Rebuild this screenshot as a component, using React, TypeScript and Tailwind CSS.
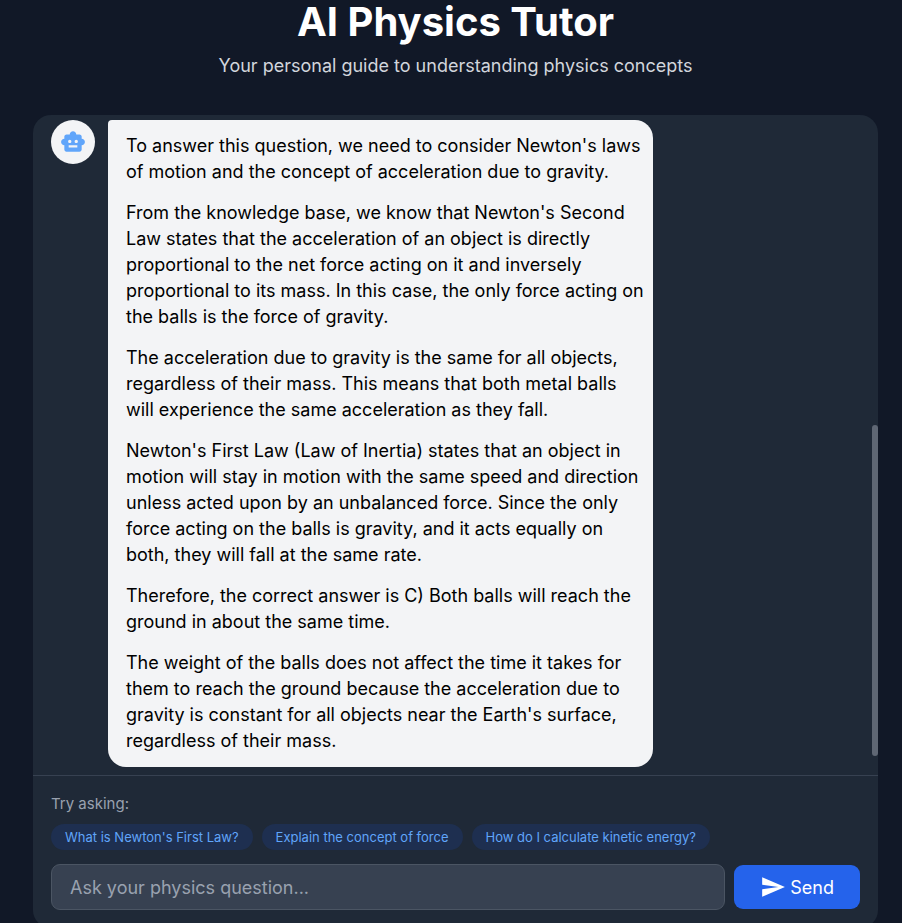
import { MdSend, MdSmartToy } from "react-icons/md";

const answer = [
  "To answer this question, we need to consider Newton's laws of motion and the concept of acceleration due to gravity.",
  "From the knowledge base, we know that Newton's Second Law states that the acceleration of an object is directly proportional to the net force acting on it and inversely proportional to its mass. In this case, the only force acting on the balls is the force of gravity.",
  "The acceleration due to gravity is the same for all objects, regardless of their mass. This means that both metal balls will experience the same acceleration as they fall.",
  "Newton's First Law (Law of Inertia) states that an object in motion will stay in motion with the same speed and direction unless acted upon by an unbalanced force. Since the only force acting on the balls is gravity, and it acts equally on both, they will fall at the same rate.",
  "Therefore, the correct answer is C) Both balls will reach the ground in about the same time.",
  "The weight of the balls does not affect the time it takes for them to reach the ground because the acceleration due to gravity is constant for all objects near the Earth's surface, regardless of their mass.",
];

const suggestions = [
  "What is Newton's First Law?",
  "Explain the concept of force",
  "How do I calculate kinetic energy?",
];

function Header() {
  return (
    <header className="pb-9 text-center">
      <h1 className="text-[40px] leading-[44px] font-bold text-white">AI Physics Tutor</h1>
      <p className="mt-2 text-[18px] leading-[27px] text-gray-300">
        Your personal guide to understanding physics concepts
      </p>
    </header>
  );
}

function Message() {
  return (
    <div className="flex items-start gap-[13px]">
      <div className="flex size-11 shrink-0 items-center justify-center rounded-full bg-gray-100 text-[#60a5fa]">
        <MdSmartToy size={26} aria-label="Tutor" />
      </div>
      <div className="flex max-w-[545px] flex-col gap-[15px] rounded-[18px] rounded-tl-sm bg-gray-100 py-[13px] pr-2 pl-[18px] text-[18px] leading-[26px] text-black">
        {answer.map((text) => (
          <p key={text}>{text}</p>
        ))}
      </div>
    </div>
  );
}

function Composer() {
  return (
    <div className="border-t border-[#374151] p-[18px]">
      <p className="text-[15px] leading-5 text-gray-400">Try asking:</p>
      <div className="mt-[10px] flex flex-wrap gap-[9px]">
        {suggestions.map((text) => (
          <button
            key={text}
            type="button"
            className="rounded-full bg-[#1e2f50] px-[14px] py-[3px] text-[13px] leading-5 text-[#60a5fa]"
          >
            {text}
          </button>
        ))}
      </div>
      <form className="mt-[14px] flex items-center gap-[9px]" onSubmit={(e) => e.preventDefault()}>
        <input
          type="text"
          aria-label="Ask your physics question"
          placeholder="Ask your physics question..."
          className="h-[46px] min-w-0 flex-1 rounded-[9px] border border-[#4b5563] bg-[#374151] px-[18px] text-[18px] text-white outline-none placeholder:text-gray-400"
        />
        <button
          type="submit"
          className="flex h-11 items-center gap-1 rounded-[9px] bg-[#2563eb] px-[26px] text-[18px] text-white"
        >
          <MdSend size={26} aria-hidden="true" />
          Send
        </button>
      </form>
    </div>
  );
}

export default function App() {
  return (
    <div className="h-screen overflow-hidden bg-[#111827] pr-6 pl-[33px] font-['Inter',sans-serif]">
      <Header />
      <main className="rounded-[18px] bg-[#1f2937]">
        <div className="relative h-[660px] overflow-hidden px-[18px] pt-[5px]">
          <Message />
          <div className="absolute right-0 bottom-[19px] h-[331px] w-[6px] rounded-full bg-[#5f6774]" />
        </div>
        <Composer />
      </main>
    </div>
  );
}
